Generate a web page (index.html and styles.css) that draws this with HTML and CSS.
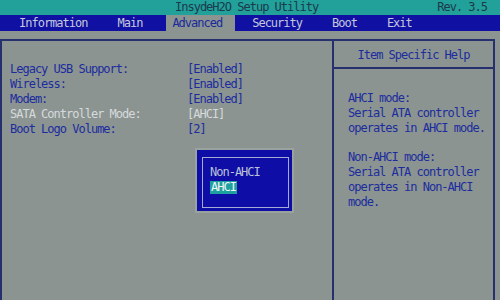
FILE: index.html
```html
<!DOCTYPE html>
<html lang="en">
<head>
  <meta charset="UTF-8">
  <title>InsydeH2O Setup Utility</title>
  <link rel="stylesheet" href="styles.css">
</head>
<body>
  <div class="screen">
    <div class="titlebar">
      <span class="title">InsydeH2O Setup Utility</span>
      <span class="rev">Rev. 3.5</span>
    </div>
    <div class="menubar">
      <span class="menu-item">Information</span>
      <span class="menu-item">Main</span>
      <span class="menu-item active">Advanced</span>
      <span class="menu-item">Security</span>
      <span class="menu-item">Boot</span>
      <span class="menu-item">Exit</span>
    </div>
    <div class="body">
      <div class="frame">
        <div class="settings">
          <div class="row"><span>Legacy USB Support:</span><span>[Enabled]</span></div>
          <div class="row"><span>Wireless:</span><span>[Enabled]</span></div>
          <div class="row"><span>Modem:</span><span>[Enabled]</span></div>
          <div class="row selected"><span>SATA Controller Mode:</span><span>[AHCI]</span></div>
          <div class="row"><span>Boot Logo Volume:</span><span>[2]</span></div>
        </div>
        <div class="help">
          <div class="help-head">Item Specific Help</div>
          <div class="help-text">
            <p>AHCI mode:<br>Serial ATA controller<br>operates in AHCI mode.</p>
            <p>Non-AHCI mode:<br>Serial ATA controller<br>operates in Non-AHCI<br>mode.</p>
          </div>
        </div>
      </div>
      <!-- option popup -->
      <div class="popup">
        <div class="popup-inner">
          <div class="opt">Non-AHCI</div>
          <div class="opt"><span class="opt-sel">AHCI</span></div>
        </div>
      </div>
    </div>
  </div>
</body>
</html>
```

FILE: styles.css
```css
html, body { margin: 0; padding: 0; }
body {
  width: 500px; height: 300px; overflow: hidden;
  background: #8b9491;
  font-family: 'DejaVu Sans Mono', 'Liberation Mono', monospace;
  font-size: 12px; letter-spacing: -1px; line-height: 15px;
}
.screen { display: flex; flex-direction: column; height: 300px; }

.titlebar {
  height: 15px; background: #22a09a; color: #1b3a4c;
  display: flex; align-items: center; justify-content: space-between;
  padding: 0 13px 0 175px;
}
.menubar {
  height: 16px; background: #1010a2; color: #c4c8dc;
  display: flex; align-items: stretch; gap: 18px;
  padding-left: 13px;
}
.menu-item { padding: 0 6px; line-height: 17px; }
.menu-item.active {
  background: #8b9491; color: #1a2a9c;
  padding-right: 13px; margin-right: -7px;
}

.body { flex: 1; position: relative; padding: 8px 5px 0 0; }
.frame {
  height: 100%; box-sizing: border-box;
  border: 2px solid #26306e; border-bottom: none;
  display: grid; grid-template-columns: 330px 1fr;
  color: #1c2c9e;
}
.settings { padding: 21px 0 0 8px; }
.row { display: grid; grid-template-columns: 177px auto; }
.row.selected { color: #d6dadc; }

.help { border-left: 2px solid #26306e; }
.help-head {
  height: 26px; line-height: 28px; text-align: center;
  border-bottom: 2px solid #26306e;
}
.help-text { padding: 22px 0 0 14px; }
.help-text p { margin: 0 0 14px; }

.popup {
  position: absolute; left: 197px; top: 119px;
  width: 95px; height: 61px; box-sizing: border-box;
  background: #0e0ea6; padding: 7px 3px 3px 5px;
  box-shadow: 0 0 0 2px #9aa29f;
}
.popup-inner {
  height: 100%; box-sizing: border-box;
  border: 1px solid #a4acd6; padding: 7px 0 0 7px;
  color: #bcc2d6;
}
.opt { line-height: 15px; height: 15px; }
.opt-sel { background: #1fa0a0; color: #f2f6f6; display: inline-block; padding: 0 1px; line-height: 13px; vertical-align: middle; }
```
